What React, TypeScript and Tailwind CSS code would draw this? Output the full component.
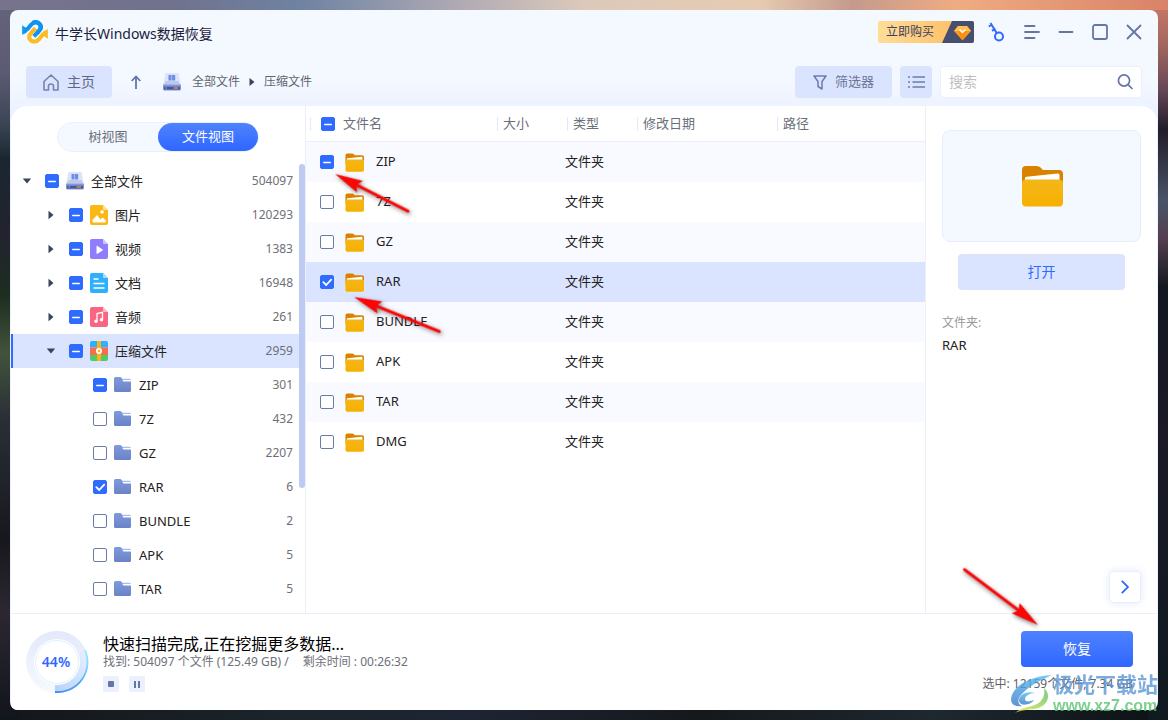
import { useEffect, useRef, useState } from "react";
import clsx from "clsx";

type CheckState = "on" | "off" | "partial";
type Kind = "disk" | "image" | "video" | "doc" | "audio" | "archive" | "folder";

type TreeItem = {
  name: string;
  count: number;
  level: 0 | 1 | 2;
  kind: Kind;
  state: CheckState;
  open?: boolean;
};

const tree: TreeItem[] = [
  { name: "全部文件", count: 504097, level: 0, kind: "disk", state: "partial", open: true },
  { name: "图片", count: 120293, level: 1, kind: "image", state: "partial" },
  { name: "视频", count: 1383, level: 1, kind: "video", state: "partial" },
  { name: "文档", count: 16948, level: 1, kind: "doc", state: "partial" },
  { name: "音频", count: 261, level: 1, kind: "audio", state: "partial" },
  { name: "压缩文件", count: 2959, level: 1, kind: "archive", state: "partial", open: true },
  { name: "ZIP", count: 301, level: 2, kind: "folder", state: "partial" },
  { name: "7Z", count: 432, level: 2, kind: "folder", state: "off" },
  { name: "GZ", count: 2207, level: 2, kind: "folder", state: "off" },
  { name: "RAR", count: 6, level: 2, kind: "folder", state: "on" },
  { name: "BUNDLE", count: 2, level: 2, kind: "folder", state: "off" },
  { name: "APK", count: 5, level: 2, kind: "folder", state: "off" },
  { name: "TAR", count: 5, level: 2, kind: "folder", state: "off" },
];

const files: { name: string; state: CheckState }[] = [
  { name: "ZIP", state: "partial" },
  { name: "7Z", state: "off" },
  { name: "GZ", state: "off" },
  { name: "RAR", state: "on" },
  { name: "BUNDLE", state: "off" },
  { name: "APK", state: "off" },
  { name: "TAR", state: "off" },
  { name: "DMG", state: "off" },
];

const indent = ["pl-[11px]", "pl-[35px]", "pl-[59px]"];

function Checkbox({ state, id, label }: { state: CheckState; id?: string; label?: string }) {
  const ref = useRef<HTMLInputElement>(null);
  const [value, setValue] = useState(state);

  useEffect(() => {
    if (ref.current) ref.current.indeterminate = value === "partial";
  }, [value]);

  return (
    <span className="grid size-[14px] shrink-0">
      <input
        ref={ref}
        id={id}
        type="checkbox"
        aria-label={label}
        checked={value === "on"}
        onChange={() => setValue(value === "on" ? "off" : "on")}
        className={clsx(
          "col-start-1 row-start-1 size-[14px] appearance-none rounded-[2px] border",
          value === "off" ? "border-[#6b7ba8] bg-white" : "border-[#2f6bff] bg-[#2f6bff]"
        )}
      />
      <svg viewBox="0 0 14 14" className="pointer-events-none col-start-1 row-start-1 size-[14px]" fill="none" stroke="#fff">
        {value === "partial" && <path d="M3.8 7.5h6.400" strokeWidth="1.6" strokeLinecap="round" />}
        {value === "on" && <path d="M3.3 7.2 6.2 10l5-5.4" strokeWidth="1.8" strokeLinecap="round" strokeLinejoin="round" />}
      </svg>
    </span>
  );
}

function DiskIcon() {
  return (
    <svg viewBox="0 0 18 18" className="size-[18px] shrink-0">
      <path d="M3.2 0h11.600q1 0 1.100 1L17.500 11.500H.5L2.100 1q.1-1 1.100-1z" fill="#dde3f8" />
      <path d="M3 8h12l2.500 3.500H.5z" fill="#bcc8ee" />
      <path d="M5.500 2h3v5.500h-3zM9 2h3.200v5.500H9z" fill="#6f8de6" />
      <path d="M0 11.500h18v4.500q0 1.500-1.500 1.500h-15Q0 17.500 0 16z" fill="#8296dc" />
      <path d="M1 13.800h16v2.700H1z" fill="#4a5794" />
      <path d="M2.500 14.500h1.500v1H2.500z" fill="#5be0d0" />
      <path d="M10.500 14.500h4.500v1h-4.500z" fill="#ffb229" />
    </svg>
  );
}

function SheetIcon({ kind }: { kind: Kind }) {
  const fill = { image: "#fbb812", video: "#8f7dfb", doc: "#2fb0fc", audio: "#fc6581" }[kind as "image"];
  return (
    <svg viewBox="0 0 18 20" className="h-5 w-[18px] shrink-0">
      <path d="M2 0h11l5 5v13q0 2-2 2H2q-2 0-2-2V2q0-2 2-2z" fill={fill} />
      <path d="M13 0l5 5h-4q-1 0-1-1z" fill="#fff" fillOpacity=".55" />
      {kind === "image" && (
        <g fill="#fff">
          <circle cx="12" cy="7" r="1.800" />
          <path d="M2.500 16.500v-1.500l4.500-5 3.500 4.500 2-2 3.500 3v1q0 1-1 1h-11.500q-1 0-1-1z" />
        </g>
      )}
      {kind === "video" && <path d="M6.500 7.500q0-1 1-.6l5 3.500q.6.600 0 1.200l-5 3.200q-1 .4-1-.6z" fill="#fff" />}
      {kind === "doc" && <path d="M3.500 6h5M3.500 10.500h11M3.500 15h11" stroke="#fff" strokeWidth="1.600" />}
      {kind === "audio" && (
        <g fill="#fff">
          <path d="M7 14V6.500l5.500-1.200V12.500" fill="none" stroke="#fff" strokeWidth="1.300" />
          <circle cx="6" cy="14.200" r="1.700" />
          <circle cx="11.500" cy="12.800" r="1.700" />
        </g>
      )}
    </svg>
  );
}

function ArchiveIcon() {
  return (
    <svg viewBox="0 0 18 20" className="h-5 w-[18px] shrink-0">
      <path d="M2 0h14q2 0 2 2v4.500H0V2q0-2 2-2z" fill="#2fb0fc" />
      <path d="M0 6.500h18v7.500H0z" fill="#fc6c4c" />
      <path d="M0 14h18v4q0 2-2 2H2q-2 0-2-2z" fill="#4fcb6c" />
      <path d="M7 0h4v20H7z" fill="#fbb414" />
      <circle cx="9" cy="10" r="2.200" fill="#fbb414" stroke="#fff" strokeWidth="1.700" />
    </svg>
  );
}

function BlueFolder() {
  return (
    <svg viewBox="0 0 18 16" className="h-4 w-[18px] shrink-0">
      <defs>
        <linearGradient id="blueFolder" x2="0" y2="1">
          <stop stopColor="#7f9bdd" />
          <stop offset="1" stopColor="#6a83c6" />
        </linearGradient>
      </defs>
      <path d="M1.500 0H6q1 0 1.500.8L8.500 2h7q1.500 0 1.500 1.500v10q0 1.500-1.500 1.500h-14Q0 15 0 13.500v-12Q0 0 1.500 0z" fill="url(#blueFolder)" />
      <path d="M8 1.500h8q1 0 1 1H8.500z" fill="#d7dff5" />
      <path d="M8.500 3H17v1.500H10q-1 0-1.500-1.500z" fill="#fff" />
    </svg>
  );
}

function YellowFolder({ className }: { className: string }) {
  return (
    <svg viewBox="0 0 42 42" className={className}>
      <defs>
        <linearGradient id="yellowFolder" x2="0" y2="1">
          <stop stopColor="#f3b71a" />
          <stop offset="1" stopColor="#f8b000" />
        </linearGradient>
      </defs>
      <path d="M5 1h11q2 0 3.500 1.500L22 5h16q4 0 4 4v14H1V5q0-4 4-4z" fill="#d98200" />
      <path d="M4 16V13q0-1 1.500-1.200L37 8.500q1.500 0 1.500 1.500v6z" fill="#fff" />
      <rect x="1" y="14.500" width="41" height="27" rx="4" fill="url(#yellowFolder)" />
    </svg>
  );
}

function TreeIcon({ kind }: { kind: Kind }) {
  if (kind === "disk") return <DiskIcon />;
  if (kind === "archive") return <ArchiveIcon />;
  if (kind === "folder") return <BlueFolder />;
  return <SheetIcon kind={kind} />;
}

function Logo() {
  return (
    <svg viewBox="0 0 75 70" className="h-6 w-[26px]" fill="none" strokeLinejoin="round">
      <path d="M0 15l13 9v13L0 43z" fill="#0f9cf0" />
      <path d="M75 55l-13-9V33l13-6z" fill="#fdbb22" />
      <path d="M5 32c10-1 13-9 20-17 8-10 20-10 26-3 6 7 4 14-3 21L34 48" stroke="#0f94ef" strokeWidth="12" />
      <path d="M70 38c-10 1-13 9-20 17-8 10-20 10-26 3-6-7-4-14 3-21l12-13" stroke="#fdbb22" strokeWidth="12" />
      <path d="M31 8c8-4 16-2 20 4 6 7 4 14-3 21l-5 6" stroke="#0f94ef" strokeWidth="12" />
    </svg>
  );
}

function TitleBar() {
  return (
    <header className="mb-3 flex h-11 items-center justify-between pl-[11px] pr-[15px]">
      <div className="flex items-center gap-[7px]">
        <Logo />
        <h1 className="pt-[3px] text-sm text-[#1d1d3d]">牛学长Windows数据恢复</h1>
      </div>
      <div className="flex items-center gap-[18px] text-[#6575a5]">
        <div className="flex items-center gap-[14px]">
          <button className="flex h-[22px] w-24 items-center overflow-hidden rounded-[2px] bg-linear-to-r from-[#ffdd97] to-[#fdb95c] pl-2 text-xs text-[#3b4262]">
            <span className="whitespace-nowrap">立即购买</span>
            <svg viewBox="0 0 32 22" className="ml-auto h-[22px] w-8 shrink-0">
              <path d="M10 0h22v22H0z" fill="#46506e" />
              <path d="M16 5h9l4 5-8.500 9.500L12 10z" fill="#fb9a1c" />
              <path d="M16 5h9l4 5H12z" fill="#ffc04f" />
              <path d="M16 10h9l-4.500 9z" fill="#ff8a10" />
              <path d="M17.500 8.500l3 3 3-3" fill="none" stroke="#fff" strokeWidth="1.500" />
            </svg>
          </button>
          <button aria-label="激活">
            <svg viewBox="0 0 18 20" className="h-5 w-[18px]" fill="none" stroke="#2f6bff" strokeWidth="2">
              <circle cx="11" cy="14.500" r="4" />
              <path d="M8.800 11.200 2.500 1M.8 4.500l3.400-2M4 8.800l3.400-2.300" />
            </svg>
          </button>
        </div>
        <button aria-label="菜单">
          <svg viewBox="0 0 16 16" className="size-4" fill="none" stroke="currentColor" strokeWidth="1.800" strokeLinecap="round">
            <path d="M1 2h9.500M1 8h14M1 14h9.500" />
          </svg>
        </button>
        <button aria-label="最小化">
          <svg viewBox="0 0 16 16" className="size-4" stroke="currentColor" strokeWidth="1.800" strokeLinecap="round">
            <path d="M1.500 8h13" />
          </svg>
        </button>
        <button aria-label="最大化">
          <svg viewBox="0 0 16 16" className="size-4" fill="none" stroke="currentColor" strokeWidth="1.800">
            <rect x="1" y="1" width="14" height="14" rx="2" />
          </svg>
        </button>
        <button aria-label="关闭">
          <svg viewBox="0 0 16 16" className="size-4" stroke="currentColor" strokeWidth="1.800" strokeLinecap="round">
            <path d="M1.500 1.500l13 13M14.500 1.500l-13 13" />
          </svg>
        </button>
      </div>
    </header>
  );
}

function Toolbar() {
  return (
    <div className="flex h-10 items-start px-[15px] pb-2">
      <button className="flex h-8 w-[86px] items-center justify-center gap-2 rounded bg-[#dbe4ff] text-sm text-[#5f6880]">
        <svg viewBox="0 0 16 17" className="h-[17px] w-4" fill="none" stroke="#7583ad" strokeWidth="1.600" strokeLinejoin="round">
          <path d="M1 7.500 8 1l7 6.500V16h-4.500v-4q0-2-2.500-2t-2.500 2v4H1z" />
        </svg>
        主页
      </button>
      <button aria-label="上一级" className="ml-[19px] flex h-8 items-center">
        <svg viewBox="0 0 10 14" className="h-[14px] w-[10px]" fill="none" stroke="#6575a5" strokeWidth="1.800">
          <path d="M5 14V1.500M.7 6 5 1.500 9.300 6" />
        </svg>
      </button>
      <nav className="ml-[22px] flex h-8 items-center text-xs text-[#5f6470]">
        <DiskIcon />
        <a href="#all" className="ml-[11px]">全部文件</a>
        <svg viewBox="0 0 6 8" className="mx-[9px] h-2 w-[6px]">
          <path d="M.5 0 5.500 4l-5 4z" fill="#39435f" />
        </svg>
        <a href="#archive">压缩文件</a>
      </nav>
      <div className="ml-auto flex gap-2">
        <button className="flex h-8 w-[97px] items-center justify-center gap-2 rounded bg-[#dbe4ff] text-[13px] text-[#6b7699]">
          <svg viewBox="0 0 14 15" className="h-[15px] w-[14px]" fill="none" stroke="#6b7bad" strokeWidth="1.500" strokeLinejoin="round">
            <path d="M1 1h12L9 6.500V14l-4-2.500v-5z" />
          </svg>
          筛选器
        </button>
        <button aria-label="列表" className="flex size-8 items-center justify-center rounded bg-[#dbe4ff]">
          <svg viewBox="0 0 17 12" className="h-3 w-[17px]" stroke="#6b7bad" strokeWidth="1.500">
            <path d="M0 1h2M0 6h2M0 11h2M4.500 1H17M4.500 6H17M4.500 11H17" />
          </svg>
        </button>
        <label className="flex h-8 w-[202px] items-center rounded border border-[#eaf0fd] bg-white px-2">
          <input
            type="text"
            aria-label="搜索"
            placeholder="搜索"
            className="min-w-0 flex-1 bg-transparent text-sm outline-none placeholder:text-[#bfbfbf]"
          />
          <svg viewBox="0 0 16 16" className="size-4" fill="none" stroke="#6575a5" strokeWidth="1.700" strokeLinecap="round">
            <circle cx="7" cy="6.500" r="5.600" />
            <path d="M11.200 10.800 15 14.500" />
          </svg>
        </label>
      </div>
    </div>
  );
}

function Sidebar() {
  return (
    <aside className="flex w-[295px] shrink-0 flex-col border-r border-[#ebeffc] pt-4">
      <div className="ml-[46px] flex h-[30px] w-[202px] rounded-full border border-[#eaf0fd] bg-[#f4f8ff] text-[13px]">
        <button className="flex-1 text-[#6b6f7a]">树视图</button>
        <button className="flex-1 rounded-full bg-linear-to-b from-[#4f82ff] to-[#2f66ff] text-white">文件视图</button>
      </div>
      <div className="mt-3 flex flex-1 items-start">
        <ul className="flex-1">
          {tree.map((item) => {
            const selected = item.name === "压缩文件";
            return (
              <li
                key={item.name}
                className={clsx(
                  "flex h-[34px] items-center pr-[6px]",
                  selected && "bg-[#dbe4ff] shadow-[inset_2px_0_0_#2f6bff]",
                  indent[item.level]
                )}
              >
                <span className="w-[23px] shrink-0">
                  {item.level < 2 && (
                    <button aria-label={item.open ? "收起" : "展开"} className="flex size-[10px] items-center justify-center">
                      <svg viewBox="0 0 10 10" className="size-[10px]">
                        <path d={item.open ? "M.8 2.500h8.400L5 7.500z" : "M2.500.8v8.400L7.500 5z"} fill="#39435f" />
                      </svg>
                    </button>
                  )}
                </span>
                <Checkbox id={`tree-${item.name}`} state={item.state} />
                <label htmlFor={`tree-${item.name}`} className="ml-[7px] flex items-center gap-[7px] text-[13px] text-[#222]">
                  <TreeIcon kind={item.kind} />
                  <span className="pt-0.5">{item.name}</span>
                </label>
                <span className="ml-auto text-xs text-[#6e7078]">{item.count}</span>
              </li>
            );
          })}
        </ul>
        <div className="h-[324px] w-[6px] rounded-full bg-[#bdcbf2]" />
      </div>
    </aside>
  );
}

function HeaderCell({ text }: { text: string }) {
  return (
    <th className="border-b border-[#ebeffc] pl-[2px] text-left font-normal">
      <span className="flex h-[14px] items-center border-l border-[#e3e9fa] pl-[5px]">{text}</span>
    </th>
  );
}

function FileTable() {
  return (
    <main className="min-w-0 flex-1">
      <table className="w-full table-fixed border-separate border-spacing-0 text-[13px] text-[#222]">
        <colgroup>
          <col className="w-[189px]" />
          <col className="w-[70px]" />
          <col className="w-[70px]" />
          <col className="w-[140px]" />
          <col />
        </colgroup>
        <thead>
          <tr className="h-9 text-[#6b6f7a]">
            <th className="border-b border-[#ebeffc] pl-1 text-left font-normal">
              <span className="flex h-[14px] items-center border-l border-[#e3e9fa] pl-[10px]">
                <Checkbox id="all-files" state="partial" />
                <label htmlFor="all-files" className="ml-2">文件名</label>
              </span>
            </th>
            <HeaderCell text="大小" />
            <HeaderCell text="类型" />
            <HeaderCell text="修改日期" />
            <HeaderCell text="路径" />
          </tr>
        </thead>
        <tbody>
          {files.map((file) => (
            <tr key={file.name} className={clsx("h-10", file.state === "on" ? "bg-[#dbe4ff]" : "odd:bg-[#f9faff]")}>
              <td className="pl-[14px]">
                <span className="flex items-center">
                  <Checkbox id={`file-${file.name}`} state={file.state} />
                  <YellowFolder className="ml-[11px] size-[19px]" />
                  <label htmlFor={`file-${file.name}`} className="ml-3">{file.name}</label>
                </span>
              </td>
              <td />
              <td>文件夹</td>
              <td />
              <td />
            </tr>
          ))}
        </tbody>
      </table>
    </main>
  );
}

function Preview() {
  return (
    <aside className="flex w-[232px] shrink-0 flex-col border-l border-[#ebeffc] px-4 pt-6 pb-[10px]">
      <div className="flex h-28 items-center justify-center rounded-lg border border-[#e6eefc] bg-[#f4f8ff]">
        <YellowFolder className="size-[42px]" />
      </div>
      <button className="mx-4 mt-3 h-9 rounded bg-[#dbe4ff] text-sm text-[#2f6bff]">打开</button>
      <dl className="mt-6">
        <dt className="text-xs leading-[18px] text-[#999]">文件夹:</dt>
        <dd className="mt-1 text-[13px] leading-[18px] text-[#222]">RAR</dd>
      </dl>
      <button
        aria-label="下一页"
        className="mt-auto flex size-8 items-center justify-center self-end rounded border border-[#e8eefd] bg-white shadow-[0_0_8px_#e3e9fa]"
      >
        <svg viewBox="0 0 8 14" className="h-[14px] w-2" fill="none" stroke="#2f6bff" strokeWidth="1.800">
          <path d="M.8.8 7 7 .8 13.200" />
        </svg>
      </button>
    </aside>
  );
}

function ScanProgress() {
  return (
    <svg viewBox="0 0 64 64" className="size-16 shrink-0">
      <defs>
        <linearGradient id="ring" x2="0" y2="1">
          <stop stopColor="#e3e9fb" />
          <stop offset="1" stopColor="#f7f9ff" />
        </linearGradient>
        <linearGradient id="arc" x1="1" y1="0" x2="0" y2="1">
          <stop stopColor="#a4f0ff" />
          <stop offset=".5" stopColor="#4aa8fb" />
          <stop offset="1" stopColor="#3d86ff" />
        </linearGradient>
        <linearGradient id="sector" x1="1" y1="0" x2="0" y2="1">
          <stop stopColor="#e8f1ff" />
          <stop offset="1" stopColor="#b7d0fb" />
        </linearGradient>
      </defs>
      <circle cx="32" cy="32" r="31" fill="url(#ring)" />
      <path d="M60.500 20A31 31 0 0 1 30 63V32z" fill="url(#sector)" />
      <path d="M60 20A30 30 0 0 1 30 62" fill="none" stroke="url(#arc)" strokeWidth="1.800" />
      <circle cx="32" cy="32" r="23" fill="#fff" />
      <circle cx="32" cy="32" r="21.500" fill="none" stroke="#dff2fd" />
      <text x="31" y="37" textAnchor="middle" fontSize="14" fontWeight="600" fill="#2f66ff">44%</text>
    </svg>
  );
}

function Footer() {
  return (
    <footer className="flex h-[97px] items-start justify-between border-t border-[#ebeffc] pt-4 pr-6 pl-[14px]">
      <div className="flex gap-[14px]">
        <ScanProgress />
        <div className="pt-1">
          <p className="text-base leading-5 text-black">快速扫描完成,正在挖掘更多数据...</p>
          <p className="flex gap-[14px] text-xs leading-4 text-[#6e7078]">
            <span>找到: 504097 个文件 (125.49 GB) /</span>
            <span>剩余时间 : 00:26:32</span>
          </p>
          <div className="mt-[6px] flex gap-[10px]">
            <button aria-label="停止" className="flex size-4 items-center justify-center rounded-[2px] bg-[#ebf0fd]">
              <span className="size-[6px] rounded-[1px] bg-[#6575a5]" />
            </button>
            <button aria-label="暂停" className="flex size-4 items-center justify-center gap-[2px] rounded-[2px] bg-[#ebf0fd]">
              <span className="h-[7px] w-[2px] bg-[#6575a5]" />
              <span className="h-[7px] w-[2px] bg-[#6575a5]" />
            </button>
          </div>
        </div>
      </div>
      <div className="flex flex-col items-end pt-px">
        <button className="h-9 w-28 rounded bg-linear-to-b from-[#4f82ff] to-[#2f66ff] text-sm text-white">恢复</button>
        <p className="mt-2 text-xs leading-[18px] text-[#5f6068]">选中: 12159个文件, 7.34 GB</p>
      </div>
    </footer>
  );
}

function Arrow({ className, length }: { className: string; length: number }) {
  return (
    <svg
      viewBox={`0 0 ${length} 16`}
      width={length}
      height="16"
      className={clsx("pointer-events-none absolute origin-left overflow-visible", className)}
    >
      <path d={`M0 8 28 1.500 25 6.500H${length - 1}a1.500 1.500 0 0 1 0 3H25L28 14.500z`} fill="#fb0505" />
    </svg>
  );
}

function Watermark() {
  return (
    <div className="pointer-events-none absolute right-[10px] bottom-1 flex items-center opacity-80">
      <svg viewBox="0 0 44 40" className="h-10 w-11" fill="none">
        <defs>
          <linearGradient id="swirl" x2="0" y2="1">
            <stop stopColor="#4fbdf0" />
            <stop offset="1" stopColor="#3f78c8" />
          </linearGradient>
          <linearGradient id="leaf" x1="1" y1="0" x2="0" y2="1">
            <stop stopColor="#55c06a" />
            <stop offset="1" stopColor="#f0e84a" />
          </linearGradient>
        </defs>
        <path d="M43 1C22 2 3 12 2 25c0 6 5 8 11 7-5-2-5-8 1-13C20 12 32 6 43 1z" fill="url(#swirl)" />
        <path d="M26 19c-9-3-17 3-16 8 1 6 12 4 15-1-5 2-9 2-9-1s5-6 10-6z" fill="url(#swirl)" />
        <path d="M35 14c9 8 2 20-10 21-7 1-13 1-19 4 9-8 18-5 25-11 4-4 5-9 4-14z" fill="url(#leaf)" />
      </svg>
      <div className="whitespace-nowrap">
        <p className="text-[21px] leading-6 font-bold text-[#5c97d6]">极光下载站</p>
        <p className="font-['Liberation_Sans',sans-serif] text-base leading-5 font-bold text-[#5cc476]">www.xz7.com</p>
      </div>
    </div>
  );
}

export default function App() {
  return (
    <div className="relative flex min-h-screen flex-col p-[10px] font-['Noto_Sans','Noto_Sans_CJK_SC',sans-serif] [background:linear-gradient(90deg,#77738d,#70728e_15%,#6f83a3_26%,#a5a3b2_37%,#ddc9ba_50%,#e6cbb2_65%,#c49a8d_73%,#efac82_82%,#d98268)_0_0/100%_10px_no-repeat,linear-gradient(#66647c,#5b5b73_10%,#3c4657_17%,#1a2730_22%,#22232f_32%,#1d2d20_41%,#42533c_49%,#2a2f36_58%,#17181d_75%,#2c2730_85%,#11151c)_0_0/20px_100%_no-repeat,linear-gradient(#cb7967,#a5685f_6%,#6b4a58_12%,#231d2a_18%,#4a5468_28%,#54404f_33%,#141820_40%,#1b1a25_60%,#101a20)_100%_0/20px_100%_no-repeat,linear-gradient(90deg,#14161a,#1b252b_25%,#1e2434_40%,#15191c_60%,#1e282f_80%,#0c1114)]">
      <div className="flex flex-1 flex-col overflow-hidden rounded-lg bg-linear-to-b from-[#f4f8ff] from-10% to-[#eaf1ff] to-15% px-px">
        <TitleBar />
        <Toolbar />
        <div className="flex flex-1 rounded-t-2xl bg-white">
          <Sidebar />
          <FileTable />
          <Preview />
        </div>
        <div className="bg-white">
          <Footer />
        </div>
      </div>
      <Arrow length={83} className="top-[166px] left-[335px] rotate-[27deg] drop-shadow-[2px_1px_2px_rgba(0,0,0,0.5)]" />
      <Arrow length={93} className="top-[289px] left-[354px] rotate-[22deg] drop-shadow-[2px_1px_2px_rgba(0,0,0,0.5)]" />
      <Arrow length={93} className="right-[37px] bottom-[87px] rotate-[217deg] drop-shadow-[-2px_-1px_2px_rgba(0,0,0,0.5)]" />
      <Watermark />
    </div>
  );
}
